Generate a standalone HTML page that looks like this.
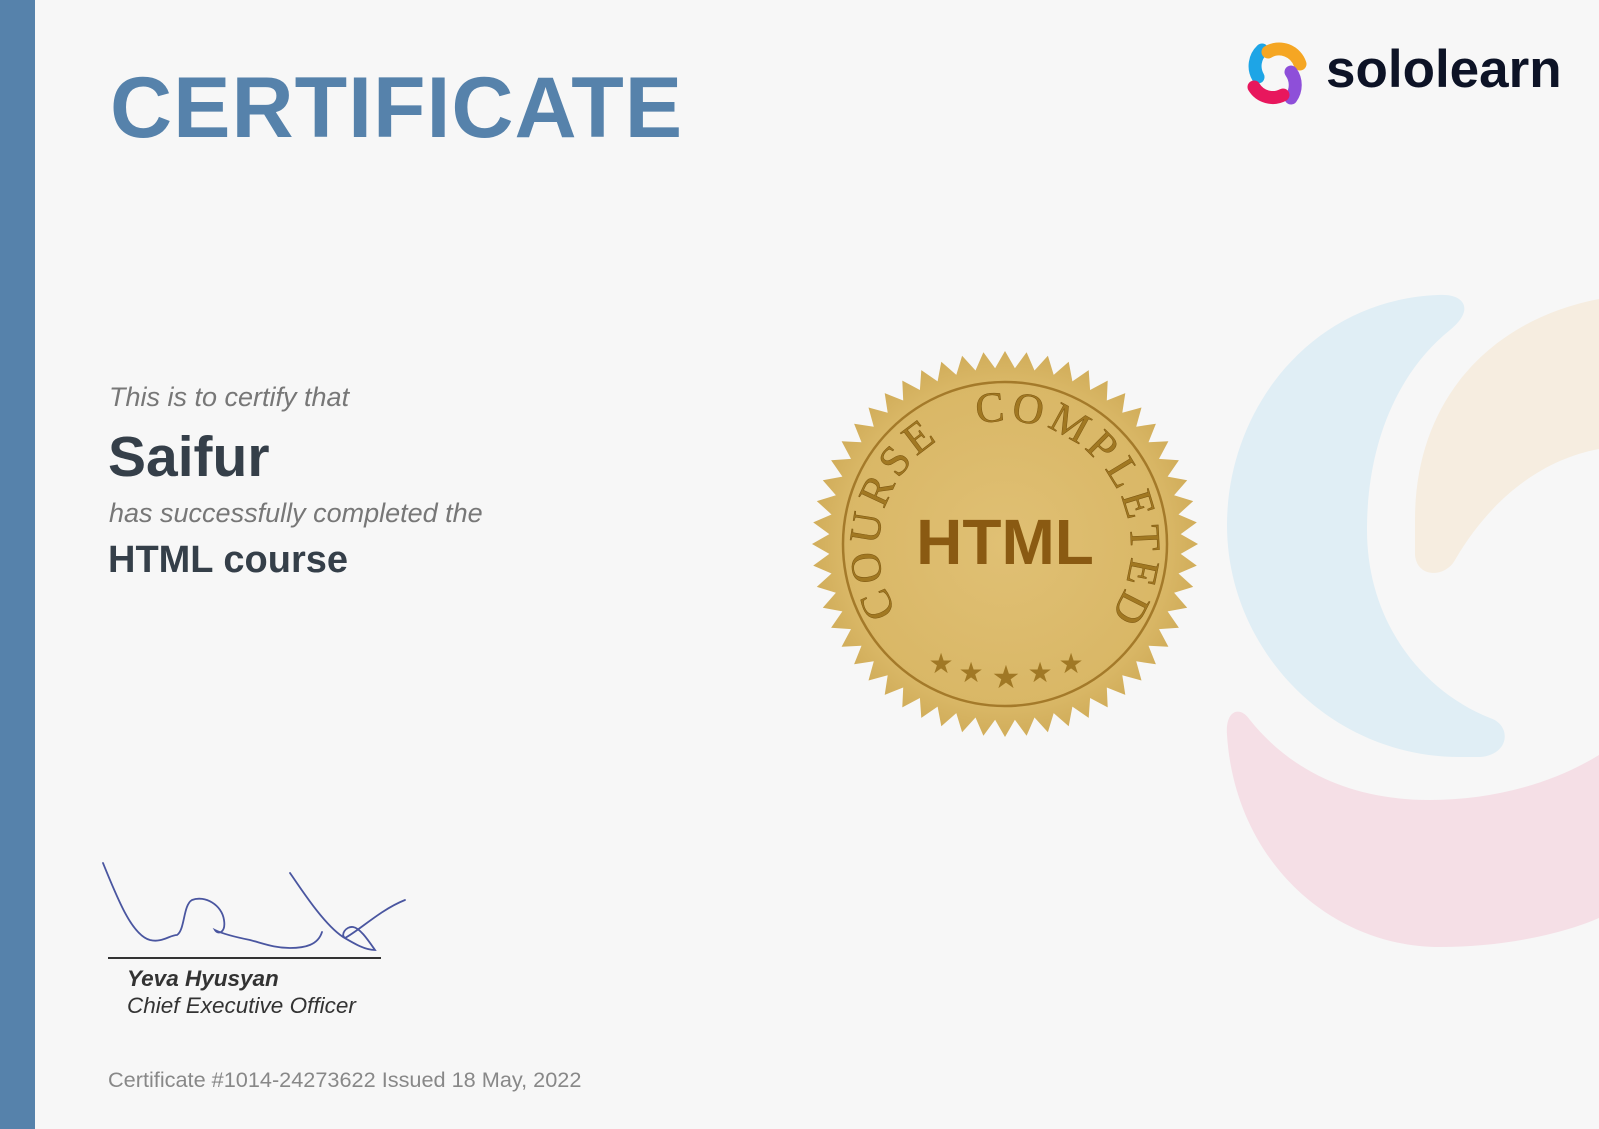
<!DOCTYPE html>
<html><head><meta charset="utf-8"><style>
html,body{margin:0;padding:0}
body{width:1599px;height:1129px;background:#f7f7f7;position:relative;overflow:hidden;font-family:"Liberation Sans",Arial,sans-serif}
.t{position:absolute;white-space:nowrap}
</style></head><body>
<svg width="1599" height="1129" style="position:absolute;left:0;top:0">
<rect x="0" y="0" width="35" height="1129" fill="#5682ab"/>
<path d="M1438,295 C1310,300 1227,410 1227,525 C1227,650 1330,757 1460,757 L1480,757 C1510,755 1512,725 1490,718 C1420,690 1367,620 1367,530 C1367,440 1400,370 1450,330 C1475,310 1465,293 1438,295 Z" fill="#e0eef5"/>
<path d="M1599,299 C1490,320 1415,400 1415,520 L1415,555 C1417,578 1445,578 1455,560 C1490,500 1540,460 1599,449 Z" fill="#f6ede0"/>
<path d="M1227,735 C1235,860 1330,947 1440,947 C1500,947 1560,935 1599,918 L1599,755 C1550,785 1490,800 1430,800 C1350,800 1290,770 1250,720 C1240,705 1225,710 1227,735 Z" fill="#f5dfe6"/>
<g fill="none" stroke-width="13" stroke-linecap="round">
<path d="M1262,50 A22,22 0 0 0 1258,77" stroke="#1ea5e6"/>
<path d="M1268,52 A22,22 0 0 1 1300,64" stroke="#f5a623"/>
<path d="M1291,72 A22,22 0 0 1 1291,98" stroke="#8e4fd9"/>
<path d="M1254,87 A22,22 0 0 0 1283,95" stroke="#e8175d"/>
</g>
<text x="1326" y="87" font-family="Liberation Sans" font-weight="bold" font-size="53" fill="#0d1326">sololearn</text>
<defs>
<radialGradient id="g" cx="50%" cy="50%" r="50%">
<stop offset="0" stop-color="#e0c074"/><stop offset="0.85" stop-color="#d9b766"/><stop offset="1" stop-color="#d1ad5a"/></radialGradient>
<path id="arc" d="M897,612 A126,126 0 1 1 1113,612"/>
</defs>
<polygon id="star" fill="url(#g)" points=""/>
<circle cx="1005" cy="544" r="162" fill="none" stroke="#a47a2a" stroke-width="2.5"/>
<text font-family="Liberation Serif" font-size="43" fill="#a17822" stroke="#7a5510" stroke-width="0.5" letter-spacing="5" word-spacing="22"><textPath href="#arc">COURSE COMPLETED</textPath></text>
<text x="1005" y="564" text-anchor="middle" font-family="Liberation Sans" font-weight="bold" font-size="64" fill="#8a5a12">HTML</text>
<g font-size="28" fill="#a07825" text-anchor="middle" font-family="DejaVu Sans">
<text x="941" y="673">★</text><text x="971" y="682">★</text><text x="1006" y="688" font-size="32">★</text><text x="1040" y="682">★</text><text x="1071" y="673">★</text>
</g>
<path d="M103,863 C118,900 132,935 150,940 C162,943 170,935 177,935 C185,930 183,905 192,900 C205,895 222,905 224,920 C226,933 218,935 215,930 C225,935 240,938 250,940 C265,944 275,948 290,948 C305,948 318,945 322,932 M290,873 C305,895 325,925 343,937 C355,944 365,950 375,950 C368,940 360,928 353,927 C346,926 340,935 345,938 C360,930 380,910 405,900" fill="none" stroke="#4a56a0" stroke-width="1.8" stroke-linecap="round"/>
<line x1="108" y1="958" x2="381" y2="958" stroke="#333" stroke-width="2"/>
</svg>
<div class="t" style="left:110px;top:65px;font-size:86px;letter-spacing:1px;font-weight:bold;color:#5682ab;line-height:1">CERTIFICATE</div>
<div class="t" style="left:109px;top:382px;font-size:27px;font-style:italic;color:#777">This is to certify that</div>
<div class="t" style="left:108px;top:424px;font-size:57px;font-weight:bold;color:#353f49">Saifur</div>
<div class="t" style="left:109px;top:498px;font-size:27px;font-style:italic;color:#777">has successfully completed the</div>
<div class="t" style="left:108px;top:539px;font-size:38px;font-weight:bold;color:#353f49">HTML course</div>
<div class="t" style="left:127px;top:966px;font-size:22.5px;font-weight:bold;font-style:italic;color:#333">Yeva Hyusyan</div>
<div class="t" style="left:127px;top:993px;font-size:22.5px;font-style:italic;color:#333">Chief Executive Officer</div>
<div class="t" style="left:108px;top:1067px;font-size:21.7px;color:#888">Certificate #1014-24273622 Issued 18 May, 2022</div>
<script>
var p=[],n=56,cx=1005,cy=544;
for(var i=0;i<n*2;i++){var r=i%2?176:193,a=i*Math.PI/n;p.push((cx+r*Math.sin(a)).toFixed(1)+","+(cy-r*Math.cos(a)).toFixed(1));}
document.getElementById("star").setAttribute("points",p.join(" "));
</script>
</body></html>
